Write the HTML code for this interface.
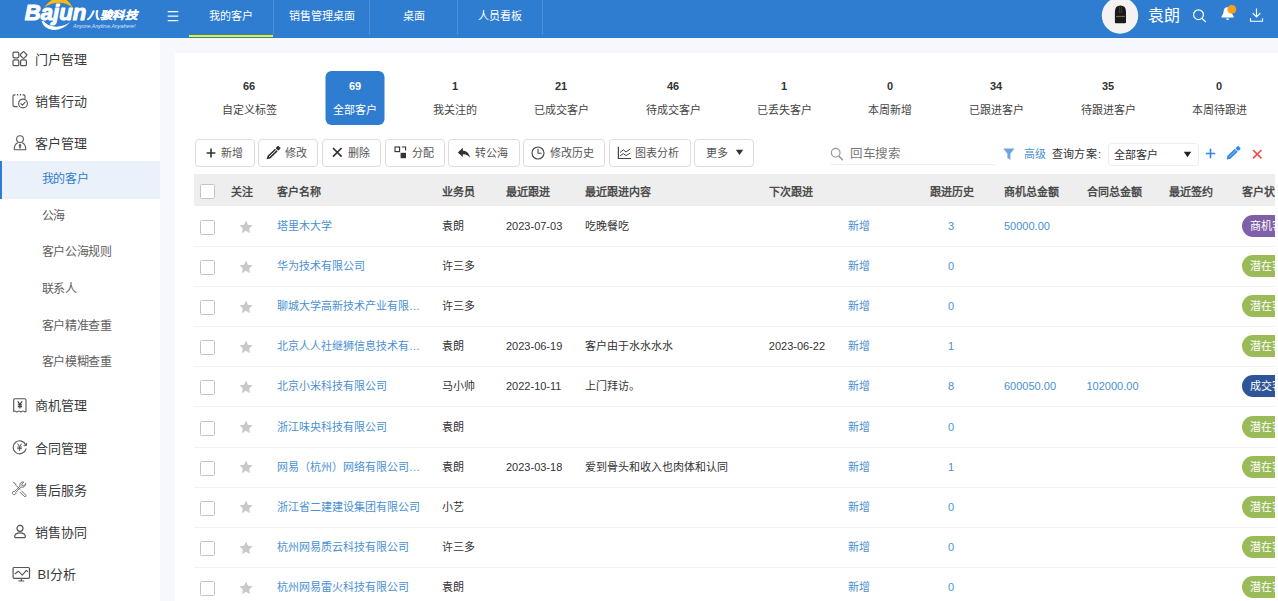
<!DOCTYPE html>
<html lang="zh-CN">
<head>
<meta charset="utf-8">
<title>CRM</title>
<style>
*{box-sizing:border-box;margin:0;padding:0}
html,body{width:1278px;height:601px;overflow:hidden}
body{position:relative;background:#f6f8fd;font-family:"Liberation Sans",sans-serif;font-size:11px;color:#333}
.abs{position:absolute}
#hdr{position:absolute;left:0;top:0;width:1278px;height:38px;background:#2e7dd1;overflow:hidden}
.tab{position:absolute;top:0;height:37px;line-height:33.4px;color:#fff;font-size:11px;text-align:center}
.sep{position:absolute;top:0;width:1px;height:35px;background:#4b8fd9}
.tab.on{border-bottom:2px solid #f0f00a}
#uname{position:absolute;left:1147.5px;top:6.300px;font-size:16px;color:#fff;line-height:20px;white-space:nowrap}
#side{position:absolute;left:0;top:38px;width:160px;height:563px;background:#fff}
.m1{position:absolute;left:35px;font-size:13px;color:#3a3a3a;line-height:20px;white-space:nowrap}
.m2{position:absolute;left:41.500px;font-size:12px;letter-spacing:-.33px;color:#5e5e5e;line-height:20px;white-space:nowrap}
.ico{position:absolute;left:11px;width:18px;height:18px}
#act{position:absolute;left:0;top:123px;width:160px;height:37.500px;background:#eaf1fa;border-left:2px solid #2e7dd1}
#panel{position:absolute;left:175px;top:53px;width:1110px;height:560px;background:#fff}
.st{position:absolute;top:71px;height:54px;text-align:center;white-space:nowrap;transform:translateX(-50%)}
.st b{display:block;font-size:11px;line-height:14px;margin-top:8px;color:#333}
.st span{display:block;font-size:11px;line-height:14px;margin-top:10px;color:#444}
.st.on{background:#2e7dd1;border-radius:6px;width:59px}
.st.on b,.st.on span{color:#fff}
.btn{position:absolute;top:139px;height:28px;border:1px solid #ddd;border-radius:4px;background:#fff;font-size:11px;line-height:26px;color:#555;white-space:nowrap}
.btn svg{position:absolute}
.btn span{position:absolute;top:0}
#tbl{position:absolute;left:193.5px;top:174px;width:1081.5px;height:440px;overflow:hidden;background:#fff}
#th{position:absolute;left:0;top:0;width:1100px;height:32px;background:#eee}
.h{position:absolute;top:1.700px;line-height:32px;font-weight:bold;font-size:11px;color:#4c4c4c;white-space:nowrap}
.row{position:absolute;left:0;width:1100px;height:40.1px;border-bottom:1px solid #f2f3f8}
.c{position:absolute;top:0;line-height:39.3px;font-size:11px;white-space:nowrap;color:#333}
.a{color:#4a90d2}
.cb{position:absolute;left:6.5px;width:15px;height:15px;border:1px solid #c4c4c4;border-radius:1.5px;background:#fff}
.tag{position:absolute;left:1048.5px;top:8px;height:22px;line-height:22px;border-radius:11px;padding:0 7.5px;color:#fff;font-size:11px;white-space:nowrap}
.tag.p{background:#7f5fa8}.tag.g{background:#9bbb59}.tag.b{background:#2f5597}

</style>
</head>
<body>
<div id="hdr">
<svg class="abs" style="left:0;top:0" width="160" height="38" viewBox="0 0 160 38">
<path d="M44 7.500Q50 -1 58.500 -2.500Q68 -2.500 73 8Q66 2.500 59 2.800Q51 3 44 7.500z" fill="#fdb813"/>
<path d="M41.500 21Q44 29 53 30Q62 30.500 70.500 22Q62 27.500 54 26.500Q47 25.500 43.500 21z" fill="#fff"/>
<text transform="translate(24.800 19.500) scale(1.090 1.050)" font-family="Liberation Sans, sans-serif" font-weight="bold" font-style="italic" font-size="20.300" fill="#fff" stroke="#fff" stroke-width="1" stroke-linejoin="round">Bajun</text>
<text transform="translate(87 19.300) scale(1 .880)" font-family="Liberation Sans, sans-serif" font-weight="bold" font-style="italic" font-size="12.400" fill="#fff" stroke="#fff" stroke-width=".25">八骏科技</text>
<text x="73.300" y="28.300" font-family="Liberation Sans, sans-serif" font-style="italic" font-size="5.300" fill="#fff" fill-opacity=".85" textLength="62" lengthAdjust="spacingAndGlyphs">Anyone,Anytime,Anywhere!</text>
</svg>

<svg class="abs" style="left:166px;top:10px" width="14" height="12" viewBox="0 0 14 12"><path d="M1.700 1.600h10.600M1.700 6.100h10.600M1.700 10.600h10.600" stroke="#fff" stroke-width="1.150" fill="none"/></svg>
<div class="tab on" style="left:189px;width:84px">我的客户</div>
<div class="sep" style="left:273px"></div>
<div class="tab" style="left:274px;width:95px">销售管理桌面</div>
<div class="sep" style="left:369px"></div>
<div class="tab" style="left:370px;width:87px">桌面</div>
<div class="sep" style="left:457px"></div>
<div class="tab" style="left:458px;width:84px">人员看板</div>
<div class="sep" style="left:542px"></div>
<svg class="abs" style="left:1095px;top:0" width="183" height="38" viewBox="0 0 183 38">
<circle cx="25" cy="15.500" r="18.200" fill="#f4f3f1"/>
<path d="M19.900 12Q19.900 5.600 25.450 5.600Q31 5.600 31 12V22.300Q31 23.300 30 23.300H20.900Q19.900 23.300 19.900 22.300z" fill="#1a1a1a"/>
<path d="M21 16.400h9" stroke="#8a8a8a" stroke-width=".800"/><path d="M24.600 6.500v6.500M26.300 6.500v6.500" stroke="#555" stroke-width=".600"/>
<circle cx="103.500" cy="14.700" r="4.900" stroke="#fff" stroke-width="1.200" fill="none"/><path d="M107 18.400l3.800 3.600" stroke="#fff" stroke-width="1.300"/>
<path d="M132.600 7.200q-3.700 0-4 4.300-.2 3.300-2.100 5.100v.9h12.200v-.9q-1.900-1.800-2.100-5.100-.3-4.300-4-4.300z" fill="#fff"/><path d="M130.900 18.500a1.700 1.500 0 0 0 3.400 0z" fill="#fff"/>
<circle cx="136.800" cy="9.300" r="4.400" fill="#f7a21b"/>
<path d="M161.500 8.600v8M157.700 13.200l3.800 3.700 3.800-3.700M155.500 18.200v3h12v-3" stroke="#fff" stroke-width="1.150" fill="none"/>
</svg>

<div id="uname">袁朗</div>
</div>
<div id="side">
<div id="act"></div>
<div class="m1" style="top:11.5px">门户管理</div>
<svg class="abs" style="left:0;top:13.0px" width="34" height="18" viewBox="0 0 34 18" fill="none" stroke="#555" stroke-width="1.2"><rect x="13" y="1.1" width="5.8" height="5.8" rx="1.3"/><rect x="13" y="8.9" width="5.8" height="5.8" rx="1.3"/><rect x="20.6" y="8.9" width="5.8" height="5.8" rx="1.3"/><rect x="-2.6" y="-2.6" width="5.2" height="5.2" rx="1.1" transform="translate(23.5 4) rotate(45)"/></svg>
<div class="m1" style="top:53.5px">销售行动</div>
<svg class="abs" style="left:0;top:55.0px" width="34" height="18" viewBox="0 0 34 18" fill="none" stroke="#555" stroke-width="1.1" stroke-linecap="round"><path d="M17.300 13.600H14.300Q13 13.600 13 12.300V3.200Q13 1.900 14.300 1.900H15M23 1.900H23.700Q25 1.900 25 3.200V5.300"/><path d="M16.900 1.800h1.300M19.800 1.800h1.300" stroke-width="1.500" stroke-linecap="butt"/><circle cx="23" cy="10.500" r="4.400"/><path d="M20.900 10.600l1.500 1.500 2.700-2.900"/></svg>
<div class="m1" style="top:95.7px">客户管理</div>
<svg class="abs" style="left:0;top:97.2px" width="34" height="18" viewBox="0 0 34 18" fill="none" stroke="#555" stroke-width="1.1" stroke-linejoin="round"><g transform="translate(0 -.5)"><circle cx="20" cy="4.600" r="3.400"/><path d="M14.200 15.200Q14.200 9.800 17.800 8.300M22.200 8.300Q25.800 9.800 25.800 15.200H14.200"/><path d="M20 9.300l1 1.300-.6 3.200h-.8l-.6-3.200z" fill="#555" stroke-width=".5"/></g></svg>
<div class="m1" style="top:358.2px">商机管理</div>
<svg class="abs" style="left:0;top:359.7px" width="34" height="18" viewBox="0 0 34 18" fill="none" stroke="#555" stroke-width="1.1" stroke-linejoin="round"><g transform="translate(0 -.6)"><path d="M13.700 14V2.600Q13.700 1.400 14.900 1.400H24.800Q26 1.400 26 2.600V14q-1 .9-2.050 0-1.050-.9-2.050 0-1 .9-2.050 0-1.050-.9-2.050 0-1 .9-2.050 0-1.050-.9-2.050 0z"/><path d="M17.700 3.900l2.200 3 2.200-3M19.900 6.900v4.100M17.800 7.500h4.200M17.800 9.200h4.200" stroke="#444" stroke-width="1.250"/></g></svg>
<div class="m1" style="top:400.6px">合同管理</div>
<svg class="abs" style="left:0;top:402.1px" width="34" height="18" viewBox="0 0 34 18" fill="none" stroke="#555" stroke-width="1.1" stroke-linecap="round"><g transform="translate(0 -.8)"><path d="M25.800 6A6.500 6.500 0 1 0 26 9.600"/><path d="M24 6.600l2.300-.3.300-2.300" stroke-linejoin="round"/><path d="M17.800 4.800l1.800 2.600 1.800-2.600M19.600 7.400v3.800M17.700 7.900h3.800M17.700 9.500h3.800" stroke-width="1"/></g></svg>
<div class="m1" style="top:442.7px">售后服务</div>
<svg class="abs" style="left:0;top:443.3px" width="34" height="18" viewBox="0 0 34 18" fill="none" stroke="#666" stroke-width="1" stroke-linecap="round" stroke-linejoin="round"><g transform="translate(12.4 1.1) scale(.94) translate(-12.4 -.7)"><path d="M13.500 1.200l2.200 1.200.5 1.700 4.200 4.200M22.300 10.200l4.300 4.300q.8.800 0 1.500-.7.700-1.500 0l-4.300-4.300"/><path d="M26.500 2.600l-2.200 2.200-1.600-.4-.4-1.600 2.200-2.200q-2.300-.5-3.600 1.200-1 1.500-.3 3.100l-5.800 5.800q-1.800-.5-2.300.9-.4 1.500.9 2.300 1.300.6 2.300-.4.700-.8.300-1.800l5.800-5.800q1.600.7 3.100-.3 1.700-1.300 1.600-3z"/></g></svg>
<div class="m1" style="top:484.7px">销售协同</div>
<svg class="abs" style="left:0;top:485.3px" width="34" height="18" viewBox="0 0 34 18" fill="none" stroke="#555" stroke-width="1.2"><circle cx="20" cy="5.300" r="3"/><path d="M14.600 14.100Q14.600 9.900 20 9.900Q25.400 9.900 25.400 14.100Q25.400 14.600 24.800 14.600H15.200Q14.600 14.600 14.600 14.100z"/></svg>
<div class="m1" style="top:527.4px;left:37.5px">BI分析</div>
<svg class="abs" style="left:0;top:528.0px" width="34" height="18" viewBox="0 0 34 18" fill="none" stroke="#555" stroke-width="1.2" stroke-linejoin="round"><rect x="13.100" y="1.500" width="16.400" height="10.800" rx="1"/><path d="M21.300 12.300v2.500M18.400 15h5.800"/><path d="M14.800 8l3.500-2.800 4 4 4-4.800 1.800 1.500" stroke-width="1.100"/></svg>

<div class="m2" style="top:130.9px;color:#2e7dd1">我的客户</div>
<div class="m2" style="top:167.9px">公海</div>
<div class="m2" style="top:204.4px">客户公海规则</div>
<div class="m2" style="top:240.9px">联系人</div>
<div class="m2" style="top:277.9px">客户精准查重</div>
<div class="m2" style="top:314.4px">客户模糊查重</div>
</div>
<div id="panel"></div>
<div class="st" style="left:249px"><b>66</b><span>自定义标签</span></div>
<div class="st on" style="left:355px"><b>69</b><span>全部客户</span></div>
<div class="st" style="left:455px"><b>1</b><span>我关注的</span></div>
<div class="st" style="left:561px"><b>21</b><span>已成交客户</span></div>
<div class="st" style="left:673px"><b>46</b><span>待成交客户</span></div>
<div class="st" style="left:784px"><b>1</b><span>已丢失客户</span></div>
<div class="st" style="left:890px"><b>0</b><span>本周新增</span></div>
<div class="st" style="left:996px"><b>34</b><span>已跟进客户</span></div>
<div class="st" style="left:1108px"><b>35</b><span>待跟进客户</span></div>
<div class="st" style="left:1219px"><b>0</b><span>本周待跟进</span></div>
<div class="btn" style="left:195px;width:59.7px"><svg style="left:10px;top:7.600px" width="10" height="10" viewBox="0 0 10 10"><path d="M5 .6v8.800M.6 5h8.800" stroke="#333" stroke-width="1.600"/></svg><span style="left:25.0px">新增</span></div>
<div class="btn" style="left:258.2px;width:59.7px"><svg style="left:7.300px;top:5.500px" width="15" height="15" viewBox="0 0 15 15"><g transform="translate(.6 13.300) rotate(-43.700)"><path d="M0 0L3.200-1.900H13.400V1.900H3.200z" fill="#333"/><path d="M3.500 0H12.900" stroke="#fff" stroke-width=".900"/><rect x="14.300" y="-1.900" width="3.600" height="3.800" rx=".8" fill="#333"/></g></svg><span style="left:25.8px">修改</span></div>
<div class="btn" style="left:321.9px;width:59.6px"><svg style="left:9.400px;top:7.300px" width="11" height="11" viewBox="0 0 11 11"><path d="M1 1l8.600 8.600M9.600 1L1 9.600" stroke="#333" stroke-width="1.700"/></svg><span style="left:25.4px">删除</span></div>
<div class="btn" style="left:385px;width:59.9px"><svg style="left:7.700px;top:6.200px" width="13" height="13" viewBox="0 0 13 13"><rect x="1" y="1" width="4.600" height="4.600" fill="none" stroke="#333" stroke-width="1.100"/><rect x="6.600" y="6.800" width="5.400" height="5.400" fill="#333"/><path d="M7.800 1h3.800v3.600" fill="none" stroke="#333" stroke-width="1.100"/></svg><span style="left:25.6px">分配</span></div>
<div class="btn" style="left:448px;width:71.5px"><svg style="left:7.500px;top:6.500px" width="14" height="12" viewBox="0 0 14 12"><path d="M5.800 .8L.8 5.400l5 4.600V7.300q4.800-.2 7.200 3.700Q12.200 3.900 5.800 3.400z" fill="#333"/></svg><span style="left:26.2px">转公海</span></div>
<div class="btn" style="left:523px;width:82.0px"><svg style="left:7px;top:5.500px" width="14" height="14" viewBox="0 0 14 14"><circle cx="7" cy="7" r="6" fill="none" stroke="#444" stroke-width="1.100"/><path d="M7 2.800V7.200h3.600" fill="none" stroke="#444" stroke-width="1.100"/></svg><span style="left:25.6px">修改历史</span></div>
<div class="btn" style="left:608.6px;width:82.0px"><svg style="left:7px;top:5.500px" width="15" height="14" viewBox="0 0 15 14"><path d="M1.400 .8V12.500H14" fill="none" stroke="#444" stroke-width="1.200"/><path d="M3 6.500l3.300-2.700 2.700 2.200 4.200-3M3 10l3.300-2.400 2.700 2 4.200-2.500" fill="none" stroke="#444" stroke-width="1"/></svg><span style="left:25.2px">图表分析</span></div>
<div class="btn" style="left:694.3px;width:59.3px"><svg style="left:39.800px;top:8.800px" width="9" height="7" viewBox="0 0 9 7"><path d="M.8 .8h7.400L4.500 6z" fill="#333"/></svg>
<span style="left:10.5px">更多</span></div>
<svg class="abs" style="left:829px;top:146px" width="16" height="16" viewBox="0 0 16 16"><circle cx="6.700" cy="6.700" r="4.300" fill="none" stroke="#999" stroke-width="1.200"/><path d="M9.900 10l4 4.200" stroke="#999" stroke-width="1.500"/></svg>
<div class="abs" style="left:850px;top:144.400px;font-size:12.500px;letter-spacing:-.5px;line-height:20px;color:#777;white-space:nowrap">回车搜索</div>
<div class="abs" style="left:829.500px;top:163.500px;width:166.500px;height:1px;background:#edf1f7"></div>
<svg class="abs" style="left:1003px;top:147.500px" width="12" height="13" viewBox="0 0 12 13"><path d="M.3 .5h11.200L7.400 5.800v6L4.400 10V5.800z" fill="#6ba6de"/></svg>
<div class="abs" style="left:1024px;top:144px;line-height:20px;color:#4a90d2;white-space:nowrap">高级</div>
<div class="abs" style="left:1051.800px;top:144px;line-height:20px;color:#333;white-space:nowrap;letter-spacing:.3px">查询方案<span style="margin-left:1px">:</span></div>
<div class="abs" style="left:1107.500px;top:143px;width:91.500px;height:23px;border:1px solid #ececec;border-radius:4px"></div>
<div class="abs" style="left:1114px;top:144.500px;line-height:20px;color:#333;white-space:nowrap">全部客户</div>
<svg class="abs" style="left:1183px;top:151px" width="9" height="7" viewBox="0 0 9 7"><path d="M.8 .8h7.400L4.500 6.200z" fill="#222"/></svg>
<svg class="abs" style="left:1205px;top:147.800px" width="11" height="11" viewBox="0 0 11 11"><path d="M5.500 .8v9.400M.8 5.500h9.400" stroke="#2e86e8" stroke-width="1.600"/></svg>
<svg class="abs" style="left:1226.300px;top:146.200px" width="15" height="15" viewBox="0 0 15 15"><g transform="translate(.6 13.500) rotate(-43.700)"><path d="M0 0L3.200-2H13.400V2H3.200z" fill="#2e86e8"/><path d="M3.500 0H12.900" stroke="#a9cdf5" stroke-width=".800"/><rect x="14.200" y="-2" width="3.600" height="4" rx=".8" fill="#2e86e8"/></g></svg>
<svg class="abs" style="left:1251.500px;top:148.800px" width="11" height="11" viewBox="0 0 11 11"><path d="M1 1l8.400 8.400M9.400 1L1 9.400" stroke="#f0484a" stroke-width="1.600"/></svg>

<div id="tbl">
<div id="th"></div>
<div class="cb" style="top:10px"></div>
<div class="h" style="left:37.5px">关注</div>
<div class="h" style="left:83.5px">客户名称</div>
<div class="h" style="left:248.5px">业务员</div>
<div class="h" style="left:312.5px">最近跟进</div>
<div class="h" style="left:391.5px">最近跟进内容</div>
<div class="h" style="left:575.1px">下次跟进</div>
<div class="h" style="left:736.0px">跟进历史</div>
<div class="h" style="left:810.5px">商机总金额</div>
<div class="h" style="left:893.0px">合同总金额</div>
<div class="h" style="left:975.1px">最近签约</div>
<div class="h" style="left:1048.8px">客户状态</div>
<div class="row" style="top:33.0px">
<div class="cb" style="top:13px"></div><svg class="abs" style="left:45.700px;top:12.800px" width="14" height="14" viewBox="0 0 24 24"><path fill="#c9c9c9" d="M12 1l3.4 7.3 7.9.9-5.9 5.4 1.6 7.9L12 18.5 5 22.5l1.6-7.9L.7 9.2l7.9-.9z"/></svg>
<div class="c a" style="left:83.5px">塔里木大学</div>
<div class="c" style="left:248.5px">袁朗</div>
<div class="c" style="left:312.5px">2023-07-03</div>
<div class="c" style="left:391.5px">吃晚餐吃</div>
<div class="c a" style="left:654.3px">新增</div>
<div class="c a" style="left:737.5px;width:40px;text-align:center">3</div>
<div class="c a" style="left:810.5px">50000.00</div>
<div class="tag p">商机客户</div>
</div>
<div class="row" style="top:73.1px">
<div class="cb" style="top:13px"></div><svg class="abs" style="left:45.700px;top:12.800px" width="14" height="14" viewBox="0 0 24 24"><path fill="#c9c9c9" d="M12 1l3.4 7.3 7.9.9-5.9 5.4 1.6 7.9L12 18.5 5 22.5l1.6-7.9L.7 9.2l7.9-.9z"/></svg>
<div class="c a" style="left:83.5px">华为技术有限公司</div>
<div class="c" style="left:248.5px">许三多</div>
<div class="c a" style="left:654.3px">新增</div>
<div class="c a" style="left:737.5px;width:40px;text-align:center">0</div>
<div class="tag g">潜在客户</div>
</div>
<div class="row" style="top:113.2px">
<div class="cb" style="top:13px"></div><svg class="abs" style="left:45.700px;top:12.800px" width="14" height="14" viewBox="0 0 24 24"><path fill="#c9c9c9" d="M12 1l3.4 7.3 7.9.9-5.9 5.4 1.6 7.9L12 18.5 5 22.5l1.6-7.9L.7 9.2l7.9-.9z"/></svg>
<div class="c a" style="left:83.5px">聊城大学高新技术产业有限…</div>
<div class="c" style="left:248.5px">许三多</div>
<div class="c a" style="left:654.3px">新增</div>
<div class="c a" style="left:737.5px;width:40px;text-align:center">0</div>
<div class="tag g">潜在客户</div>
</div>
<div class="row" style="top:153.3px">
<div class="cb" style="top:13px"></div><svg class="abs" style="left:45.700px;top:12.800px" width="14" height="14" viewBox="0 0 24 24"><path fill="#c9c9c9" d="M12 1l3.4 7.3 7.9.9-5.9 5.4 1.6 7.9L12 18.5 5 22.5l1.6-7.9L.7 9.2l7.9-.9z"/></svg>
<div class="c a" style="left:83.5px">北京人人社继狮信息技术有…</div>
<div class="c" style="left:248.5px">袁朗</div>
<div class="c" style="left:312.5px">2023-06-19</div>
<div class="c" style="left:391.5px">客户由于水水水水</div>
<div class="c" style="left:575.3px">2023-06-22</div>
<div class="c a" style="left:654.3px">新增</div>
<div class="c a" style="left:737.5px;width:40px;text-align:center">1</div>
<div class="tag g">潜在客户</div>
</div>
<div class="row" style="top:193.4px">
<div class="cb" style="top:13px"></div><svg class="abs" style="left:45.700px;top:12.800px" width="14" height="14" viewBox="0 0 24 24"><path fill="#c9c9c9" d="M12 1l3.4 7.3 7.9.9-5.9 5.4 1.6 7.9L12 18.5 5 22.5l1.6-7.9L.7 9.2l7.9-.9z"/></svg>
<div class="c a" style="left:83.5px">北京小米科技有限公司</div>
<div class="c" style="left:248.5px">马小帅</div>
<div class="c" style="left:312.5px">2022-10-11</div>
<div class="c" style="left:391.5px">上门拜访。</div>
<div class="c a" style="left:654.3px">新增</div>
<div class="c a" style="left:737.5px;width:40px;text-align:center">8</div>
<div class="c a" style="left:810.5px">600050.00</div>
<div class="c a" style="left:893px">102000.00</div>
<div class="tag b">成交客户</div>
</div>
<div class="row" style="top:233.5px">
<div class="cb" style="top:13px"></div><svg class="abs" style="left:45.700px;top:12.800px" width="14" height="14" viewBox="0 0 24 24"><path fill="#c9c9c9" d="M12 1l3.4 7.3 7.9.9-5.9 5.4 1.6 7.9L12 18.5 5 22.5l1.6-7.9L.7 9.2l7.9-.9z"/></svg>
<div class="c a" style="left:83.5px">浙江味央科技有限公司</div>
<div class="c" style="left:248.5px">袁朗</div>
<div class="c a" style="left:654.3px">新增</div>
<div class="c a" style="left:737.5px;width:40px;text-align:center">0</div>
<div class="tag g">潜在客户</div>
</div>
<div class="row" style="top:273.6px">
<div class="cb" style="top:13px"></div><svg class="abs" style="left:45.700px;top:12.800px" width="14" height="14" viewBox="0 0 24 24"><path fill="#c9c9c9" d="M12 1l3.4 7.3 7.9.9-5.9 5.4 1.6 7.9L12 18.5 5 22.5l1.6-7.9L.7 9.2l7.9-.9z"/></svg>
<div class="c a" style="left:83.5px">网易（杭州）网络有限公司…</div>
<div class="c" style="left:248.5px">袁朗</div>
<div class="c" style="left:312.5px">2023-03-18</div>
<div class="c" style="left:391.5px">爱到骨头和收入也肉体和认同</div>
<div class="c a" style="left:654.3px">新增</div>
<div class="c a" style="left:737.5px;width:40px;text-align:center">1</div>
<div class="tag g">潜在客户</div>
</div>
<div class="row" style="top:313.7px">
<div class="cb" style="top:13px"></div><svg class="abs" style="left:45.700px;top:12.800px" width="14" height="14" viewBox="0 0 24 24"><path fill="#c9c9c9" d="M12 1l3.4 7.3 7.9.9-5.9 5.4 1.6 7.9L12 18.5 5 22.5l1.6-7.9L.7 9.2l7.9-.9z"/></svg>
<div class="c a" style="left:83.5px">浙江省二建建设集团有限公司</div>
<div class="c" style="left:248.5px">小艺</div>
<div class="c a" style="left:654.3px">新增</div>
<div class="c a" style="left:737.5px;width:40px;text-align:center">0</div>
<div class="tag g">潜在客户</div>
</div>
<div class="row" style="top:353.8px">
<div class="cb" style="top:13px"></div><svg class="abs" style="left:45.700px;top:12.800px" width="14" height="14" viewBox="0 0 24 24"><path fill="#c9c9c9" d="M12 1l3.4 7.3 7.9.9-5.9 5.4 1.6 7.9L12 18.5 5 22.5l1.6-7.9L.7 9.2l7.9-.9z"/></svg>
<div class="c a" style="left:83.5px">杭州网易质云科技有限公司</div>
<div class="c" style="left:248.5px">许三多</div>
<div class="c a" style="left:654.3px">新增</div>
<div class="c a" style="left:737.5px;width:40px;text-align:center">0</div>
<div class="tag g">潜在客户</div>
</div>
<div class="row" style="top:393.9px">
<div class="cb" style="top:13px"></div><svg class="abs" style="left:45.700px;top:12.800px" width="14" height="14" viewBox="0 0 24 24"><path fill="#c9c9c9" d="M12 1l3.4 7.3 7.9.9-5.9 5.4 1.6 7.9L12 18.5 5 22.5l1.6-7.9L.7 9.2l7.9-.9z"/></svg>
<div class="c a" style="left:83.5px">杭州网易雷火科技有限公司</div>
<div class="c" style="left:248.5px">袁朗</div>
<div class="c a" style="left:654.3px">新增</div>
<div class="c a" style="left:737.5px;width:40px;text-align:center">0</div>
<div class="tag g">潜在客户</div>
</div>
</div>
</body>
</html>
